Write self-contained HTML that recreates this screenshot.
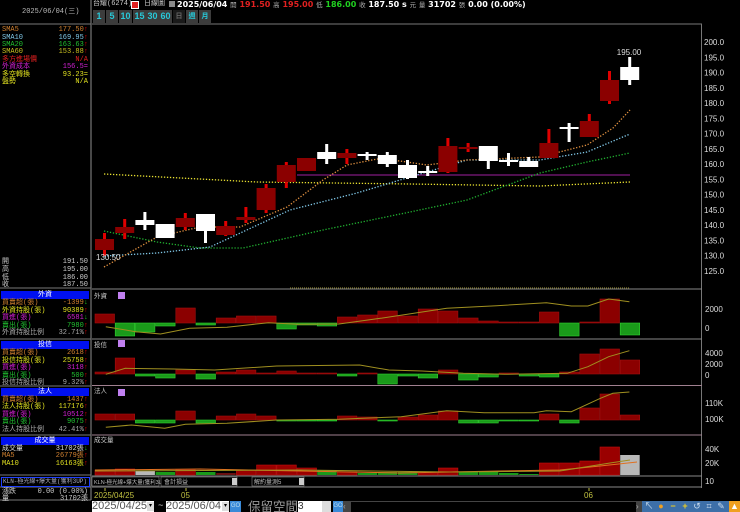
<!DOCTYPE html>
<html><head><meta charset="utf-8">
<style>
html,body{margin:0;padding:0;background:#000;width:740px;height:512px;overflow:hidden;}
body{position:relative;font-family:"Liberation Sans","Noto Sans CJK TC",sans-serif;}
.t{position:absolute;white-space:nowrap;font-size:7px;line-height:8px;font-family:"Liberation Mono","Noto Sans CJK TC",monospace;}
.r{position:absolute;white-space:nowrap;font-size:7px;line-height:8px;font-family:"Liberation Mono","Noto Sans CJK TC",monospace;text-align:right;}
.hdr{position:absolute;left:1px;width:88px;height:8px;background:#0010f0;color:#fff;font-size:7px;line-height:8px;text-align:center;font-family:"Liberation Sans","Noto Sans CJK TC",sans-serif;}
.btn{position:absolute;top:10px;height:13px;background:#3c3c3c;color:#28c8d8;font-size:9px;line-height:13px;text-align:center;font-weight:bold;}
.ic{position:absolute;top:501px;width:12px;height:11px;font-size:9px;line-height:11px;text-align:center;}
svg{position:absolute;left:0;top:0;}
</style></head><body>
<svg id="s" width="740" height="512" viewBox="0 0 740 512" xmlns="http://www.w3.org/2000/svg"></svg>

<div class="t" style="left:22px;top:8px;color:#bbb;">2025/06/04(三)</div>
<div class="t" style="left:2px;top:26px;color:#d08030">SMA5</div><div class="r" style="right:652px;top:26px;color:#d08030">177.50<span style="color:#e00">↑</span></div>
<div class="t" style="left:2px;top:34px;color:#80c8e8">SMA10</div><div class="r" style="right:652px;top:34px;color:#80c8e8">169.95<span style="color:#e00">↑</span></div>
<div class="t" style="left:2px;top:41px;color:#20c030">SMA20</div><div class="r" style="right:652px;top:41px;color:#20c030">163.63<span style="color:#e00">↑</span></div>
<div class="t" style="left:2px;top:48px;color:#c8c020">SMA60</div><div class="r" style="right:652px;top:48px;color:#c8c020">153.88<span style="color:#e00">↑</span></div>
<div class="t" style="left:2px;top:56px;color:#e02020">多方進場價</div><div class="r" style="right:652px;top:56px;color:#e02020">N/A</div>
<div class="t" style="left:2px;top:63px;color:#d020d0">外資成本</div><div class="r" style="right:652px;top:63px;color:#d020d0">156.5=</div>
<div class="t" style="left:2px;top:71px;color:#e0e020">多空轉換</div><div class="r" style="right:652px;top:71px;color:#e0e020">93.23=</div>
<div class="t" style="left:2px;top:78px;color:#e0e020">盤勢</div><div class="r" style="right:652px;top:78px;color:#e0e020">N/A</div>

<div class="t" style="left:2px;top:258px;color:#ccc">開</div><div class="r" style="right:652px;top:258px;color:#ccc">191.50</div>
<div class="t" style="left:2px;top:266px;color:#ccc">高</div><div class="r" style="right:652px;top:266px;color:#ccc">195.00</div>
<div class="t" style="left:2px;top:274px;color:#ccc">低</div><div class="r" style="right:652px;top:274px;color:#ccc">186.00</div>
<div class="t" style="left:2px;top:281px;color:#ccc">收</div><div class="r" style="right:652px;top:281px;color:#ccc">187.50</div>

<div class="hdr" style="top:291px">外資</div>
<div class="t" style="left:2px;top:299px;color:#d08030">買賣超(張)</div><div class="r" style="right:652px;top:299px;color:#d08030">-1399<span style="color:#2c2">↓</span></div>
<div class="t" style="left:2px;top:307px;color:#e0e020">外資持股(張)</div><div class="r" style="right:652px;top:307px;color:#e0e020">90389<span style="color:#e00">↑</span></div>
<div class="t" style="left:2px;top:314px;color:#d020d0">買進(張)</div><div class="r" style="right:652px;top:314px;color:#d020d0">6581<span style="color:#2c2">↓</span></div>
<div class="t" style="left:2px;top:322px;color:#20c030">賣出(張)</div><div class="r" style="right:652px;top:322px;color:#20c030">7980<span style="color:#e00">↑</span></div>
<div class="t" style="left:2px;top:329px;color:#aaa">外資持股比例</div><div class="r" style="right:652px;top:329px;color:#aaa">32.71%<span style="color:#e00">↑</span></div>

<div class="hdr" style="top:341px">投信</div>
<div class="t" style="left:2px;top:349px;color:#d08030">買賣超(張)</div><div class="r" style="right:652px;top:349px;color:#d08030">2618<span style="color:#e00">↑</span></div>
<div class="t" style="left:2px;top:357px;color:#e0e020">投信持股(張)</div><div class="r" style="right:652px;top:357px;color:#e0e020">25758<span style="color:#e00">↑</span></div>
<div class="t" style="left:2px;top:364px;color:#d020d0">買進(張)</div><div class="r" style="right:652px;top:364px;color:#d020d0">3118<span style="color:#e00">↑</span></div>
<div class="t" style="left:2px;top:372px;color:#20c030">賣出(張)</div><div class="r" style="right:652px;top:372px;color:#20c030">500<span style="color:#e00">↑</span></div>
<div class="t" style="left:2px;top:379px;color:#aaa">投信持股比例</div><div class="r" style="right:652px;top:379px;color:#aaa">9.32%<span style="color:#e00">↑</span></div>

<div class="hdr" style="top:388px">法人</div>
<div class="t" style="left:2px;top:396px;color:#d08030">買賣超(張)</div><div class="r" style="right:652px;top:396px;color:#d08030">1437<span style="color:#e00">↑</span></div>
<div class="t" style="left:2px;top:403px;color:#e0e020">法人持股(張)</div><div class="r" style="right:652px;top:403px;color:#e0e020">117176<span style="color:#e00">↑</span></div>
<div class="t" style="left:2px;top:411px;color:#d020d0">買進(張)</div><div class="r" style="right:652px;top:411px;color:#d020d0">10512<span style="color:#e00">↑</span></div>
<div class="t" style="left:2px;top:418px;color:#20c030">賣出(張)</div><div class="r" style="right:652px;top:418px;color:#20c030">9075<span style="color:#e00">↑</span></div>
<div class="t" style="left:2px;top:426px;color:#aaa">法人持股比例</div><div class="r" style="right:652px;top:426px;color:#aaa">42.41%<span style="color:#e00">↑</span></div>

<div class="hdr" style="top:437px">成交量</div>
<div class="t" style="left:2px;top:445px;color:#ddd">成交量</div><div class="r" style="right:652px;top:445px;color:#ddd">31702張<span style="color:#2c2">↓</span></div>
<div class="t" style="left:2px;top:452px;color:#d08030">MA5</div><div class="r" style="right:652px;top:452px;color:#d08030">26779張<span style="color:#e00">↑</span></div>
<div class="t" style="left:2px;top:460px;color:#e0e020">MA10</div><div class="r" style="right:652px;top:460px;color:#e0e020">16163張<span style="color:#e00">↑</span></div>

<div style="position:absolute;left:1px;top:477px;width:87px;height:8px;border:1px solid #2040ff;background:#000;overflow:hidden"><div class="t" style="left:1px;top:0px;color:#aab;font-size:6px">KLN-極光線+爆大量(獲利3UP)</div></div>
<div class="t" style="left:2px;top:488px;color:#ccc">漲跌</div><div class="r" style="right:652px;top:488px;color:#ccc">0.00 (0.00%)</div>
<div class="t" style="left:2px;top:495px;color:#ccc">量</div><div class="r" style="right:652px;top:495px;color:#ccc">31702張</div>

<!-- header -->
<div class="t" style="left:93px;top:0px;color:#ccc;font-size:7px">台耀(6274)</div>
<div style="position:absolute;left:131px;top:1px;width:6px;height:6px;background:#e02020;border:1px solid #fff"></div>
<div class="t" style="left:144px;top:0px;color:#ccc;font-size:7px">日線圖</div>
<div style="position:absolute;left:169px;top:1px;width:6px;height:6px;background:#888"></div>
<div style="position:absolute;left:177px;top:-1px;white-space:nowrap;font-size:8px;font-weight:bold;color:#fff;font-family:'DejaVu Sans',sans-serif;line-height:11px">2025/06/04 <span style="font-weight:normal;color:#aaa;font-size:6.5px">開</span> <span style="color:#e02020">191.50</span> <span style="font-weight:normal;color:#aaa;font-size:6.5px">高</span> <span style="color:#e02020">195.00</span> <span style="font-weight:normal;color:#aaa;font-size:6.5px">低</span> <span style="color:#20d020">186.00</span> <span style="font-weight:normal;color:#aaa;font-size:6.5px">收</span> 187.50 s <span style="font-weight:normal;color:#aaa;font-size:6.5px">元</span> <span style="font-weight:normal;color:#aaa;font-size:6.5px">量</span> 31702 <span style="font-weight:normal;color:#aaa;font-size:6.5px">張</span> 0.00 (0.00%)</div>
<div class="btn" style="left:93px;width:12px">1</div>
<div class="btn" style="left:106px;width:12px">5</div>
<div class="btn" style="left:119px;width:13px">10</div>
<div class="btn" style="left:133px;width:13px">15</div>
<div class="btn" style="left:146px;width:13px">30</div>
<div class="btn" style="left:159px;width:13px">60</div>
<div class="btn" style="left:173px;width:12px;background:#1a1a1a;color:#666;font-size:7px">日</div>
<div class="btn" style="left:186px;width:12px;font-size:7px">週</div>
<div class="btn" style="left:199px;width:12px;font-size:7px">月</div>

<!-- bottom -->
<div style="position:absolute;left:92px;top:501px;width:62px;height:11px;background:#fff;color:#555;font-size:11px;line-height:11px;font-family:'Liberation Sans',sans-serif;overflow:hidden">2025/04/25</div>
<div style="position:absolute;left:147px;top:502px;width:7px;height:9px;background:#ddd;color:#000;font-size:6px;line-height:9px;text-align:center">▾</div>
<div class="t" style="left:158px;top:502px;color:#ccc;font-size:9px">~</div>
<div style="position:absolute;left:166px;top:501px;width:63px;height:11px;background:#fff;color:#555;font-size:11px;line-height:11px;font-family:'Liberation Sans',sans-serif;overflow:hidden">2025/06/04</div>
<div style="position:absolute;left:222px;top:502px;width:7px;height:9px;background:#ddd;color:#000;font-size:6px;line-height:9px;text-align:center">▾</div>
<div style="position:absolute;left:230px;top:501px;width:11px;height:11px;background:#3a8ad8;color:#bde;font-size:6px;line-height:11px;text-align:center">GO</div>
<div style="position:absolute;left:248px;top:499px;color:#999;font-size:12.5px;line-height:13px;white-space:nowrap;font-family:'Noto Sans CJK TC',sans-serif">保留空間</div>
<div style="position:absolute;left:298px;top:501px;width:24px;height:11px;background:#fff;color:#333;font-size:10px;line-height:11px">3</div>
<div style="position:absolute;left:322px;top:501px;width:9px;height:11px;background:#ddd"></div>
<div style="position:absolute;left:333px;top:501px;width:10px;height:11px;background:#3a8ad8;color:#bde;font-size:6px;line-height:11px;text-align:center">GO</div>
<div style="position:absolute;left:343px;top:501px;width:7px;height:11px;background:#444;color:#aaa;font-size:8px;line-height:11px">‹</div>
<div style="position:absolute;left:350px;top:501px;width:285px;height:10px;border:1px solid #444;background:#000"></div>
<div style="position:absolute;left:636px;top:501px;width:6px;height:11px;background:#444;color:#aaa;font-size:8px;line-height:11px">›</div>
<div style="position:absolute;left:642px;top:501px;width:98px;height:11px;background:#3d6fa8"></div>
<div class="ic" style="left:643px;color:#cde">↖</div>
<div class="ic" style="left:655px;color:#f0a020">●</div>
<div class="ic" style="left:667px;color:#f0d020;font-weight:bold">−</div>
<div class="ic" style="left:679px;color:#f0d020;font-weight:bold">+</div>
<div class="ic" style="left:691px;color:#cde">↺</div>
<div class="ic" style="left:703px;color:#cde">⌗</div>
<div class="ic" style="left:715px;color:#cde">✎</div>
<div class="ic" style="left:729px;width:11px;background:#f0a020;color:#fff">▲</div>

<script>
var s=document.getElementById('s'),h='';
function L(x1,y1,x2,y2,c,w,d){h+='<line x1="'+x1+'" y1="'+y1+'" x2="'+x2+'" y2="'+y2+'" stroke="'+c+'" stroke-width="'+(w||1)+'"'+(d?' stroke-dasharray="'+d+'"':'')+'/>';}
function R(x,y,w,hh,c,st){h+='<rect x="'+x+'" y="'+y+'" width="'+w+'" height="'+hh+'" fill="'+c+'"'+(st?' stroke="'+st+'" stroke-width="0.6"':'')+'/>';}
function T(x,y,t,c,sz,a){h+='<text x="'+x+'" y="'+y+'" fill="'+c+'" font-size="'+(sz||8)+'" font-family="Liberation Sans,Noto Sans CJK TC,sans-serif"'+(a?' text-anchor="'+a+'"':'')+'>'+t+'</text>';}
function P(pts,c,d,w){h+='<polyline points="'+pts+'" fill="none" stroke="'+c+'" stroke-width="'+(w||1.3)+'"'+(d?' stroke-dasharray="'+d+'"':'')+'/>';}
L(91,0,91,500,'#777',1.2);
L(0,24,91,24,'#777',1);
L(92,24,702,24,'#777',1);
L(701.5,24,701.5,488,'#777',1);
L(0,288,91,288,'#777');L(0,339,91,339,'#777');L(0,386,91,386,'#777');L(0,435,91,435,'#777');L(0,475,91,475,'#777');L(0,487,91,487,'#777');L(0,500,91,500,'#777');
L(92,289,702,289,'#888');L(92,339,702,339,'#888');L(92,385.5,702,385.5,'#a08090');L(92,435,702,435,'#a08090');L(92,476,702,476,'#888');L(92,487,702,487,'#888');
for(var p=200;p>=125;p-=5){var y=42+(200-p)*3.05;T(704,y+3,p.toFixed(1),'#ddd',8);}
P('104,174 257,182 410,184 540,186 630,182','#e8e030','1.3 1.7');
P('297,175 630,175','#a020a0',null,1);
P('104,231 157,242 200,248 243,248 323,230 410,212 467,200 540,173 587,162 630,153','#20b030','1.3 1.7');
P('104,256 157,253 210,247 290,210 357,193 410,177 467,160 540,160 587,152 630,134','#80c8e8','1.3 1.7');
P('104,267 157,237 200,227 240,227 287,207 323,180 347,165 377,159 400,161 427,165 467,160 540,157 587,145 613,128 630,110','#e09040','1.3 1.7');
var C=[['R',239,250,233,256],['R',227,233,219,239],['W',220,225,212,230],['W',224,238,224,238],['R',218,227,213,230],['W',214,231,214,243],['R',226,235,221,236],['R',217,220,207,223],['R',188,210,184,213],['R',165,182,162,188],['R',158,171,158,171],['W',152,159,144,164],['R',153,158,149,164],['W',154,156,152,160],['W',155,164,152,167],['W',165,178,160,179],['W',171,173,166,176],['R',146,172,138,173],['R',147,149,143,152],['W',146,161,146,169],['W',160,162,153,166],['W',161,167,157,167],['R',143,158,129,158],['W',127,129,123,142],['R',121,137,114,137],['R',80,101,71,104],['W',67,80,57,85]];
for(var i=0;i<C.length;i++){var c=C[i],cx=104.5+20.2*i;
 if(c[0]=='R'){R(cx-1.5,c[3],3,c[4]-c[3],'#e00000');R(cx-9.5,c[1],19,Math.max(c[2]-c[1],2),'#8b0000');}
 else{R(cx-1.5,c[3],3,c[4]-c[3],'#fff');R(cx-9.5,c[1],19,Math.max(c[2]-c[1],2),'#fff');}}
T(96,260,'130.50','#ddd',8);T(629,55,'195.00','#ddd',8,'middle');
L(290,288,630,288,'#807830',1.2,'1 1');
function bars(z,vals){
 for(var i=0;i<vals.length;i++){var v=vals[i],x=95+20.2*i;
  if(v<z)R(x,v,19.5,z-v,'#8b0000','#a01010');else if(v>z)R(x,z,19.5,v-z,'#1a9a1a','#30d030');}}
bars(323,[314,336,332,326,308,325,318,316,316,329,325,326,317,315,311,316,309,311,318,321,322,322,312,336,322,299,335]);
bars(374,[372,358,376,378,370,379,372,370,373,371,373,373,376,373,384,376,378,370,380,377,373,376,377,372,354,349,360]);
bars(420,[414,414,423,423,411,423,416,414,416,421,421,421,416,417,421,417,415,411,423,423,421,421,414,423,408,394,415]);
var sx=function(a){return 90+a/2.41},sy=function(b){return 285+b/3};
function SL(arr,c){var o=[];for(var i=0;i<arr.length;i+=2)o.push(sx(arr[i]).toFixed(1)+','+sy(arr[i+1]).toFixed(1));P(o.join(' '),c,null,1);}
SL([38,125,110,140,170,147,240,130,330,127,430,113,500,118,600,117,700,100,860,70,980,62,1100,53,1160,63,1200,63,1250,42,1300,50],'#a09020');
SL([38,268,85,250,200,252,300,255,450,243,650,240,720,255,800,258,900,265,1000,268,1150,265,1200,245,1250,215,1300,197],'#a09020');
SL([38,427,100,420,180,430,230,418,330,415,450,405,600,403,750,395,860,377,950,383,1070,383,1100,377,1160,380,1230,340,1260,325,1300,321],'#a09020');
T(94,298,'外資','#ccc',6.5);T(94,347,'投信','#ccc',6.5);T(94,393,'法人','#ccc',6.5);T(94,442,'成交量','#ccc',6.5);
R(118,292,7,7,'#c080f0');R(118,340,7,7,'#c080f0');R(118,389,7,7,'#c080f0');
T(705,312,'2000','#ddd',8);T(705,331,'0','#ddd',8);
T(705,356,'4000','#ddd',8);T(705,367,'2000','#ddd',8);T(705,378,'0','#ddd',8);
T(705,406,'110K','#ddd',8);T(705,422,'100K','#ddd',8);
T(705,452,'40K','#ddd',8);T(705,466,'20K','#ddd',8);T(705,484,'10','#ddd',8);
var V=[[470,'r'],[469,'r'],[471,'w'],[472,'g'],[470,'r'],[472,'g'],[473,'d'],[470,'r'],[465,'r'],[465,'r'],[468,'r'],[470,'g'],[472,'r'],[473,'g'],[472,'g'],[472,'g'],[473,'r'],[468,'r'],[472,'g'],[472,'g'],[473,'g'],[474,'g'],[463,'r'],[463,'r'],[461,'r'],[447,'r'],[455,'w']];
var col={r:'#9a0000',g:'#1a9a1a',w:'#b8b8b8',d:'#6a1010'};
for(var i=0;i<V.length;i++){R(95+20.2*i,V[i][0],19.5,475-V[i][0],col[V[i][1]],V[i][1]=='r'?'#c01010':null);}
P('95,470 200,469 300,471 400,473 500,471 560,470 600,466 637,462','#e07020',null,1);
P('95,471 300,470 450,472 560,471 610,463 630,460','#a09020',null,1);
R(92,477,67,9,'#000','#888');T(94,484,'KLN-極光線+爆大量(獲利3UP)','#bbb',5.5);
R(161,477,76,9,'#000','#888');T(164,484,'會計損益','#bbb',6);R(232,478,5,7,'#ccc');
R(252,477,52,9,'#000','#888');T(254,484,'解約量測5','#bbb',6);R(299,478,5,7,'#ccc');
L(105,488,105,491,'#bb4');L(186,488,186,491,'#bb4');L(589,488,589,491,'#bb4');
T(94,498,'2025/04/25','#c0c040',8);T(181,498,'05','#c0c040',8);T(584,498,'06','#c0c040',8);
s.innerHTML=h;
</script>
</body></html>
